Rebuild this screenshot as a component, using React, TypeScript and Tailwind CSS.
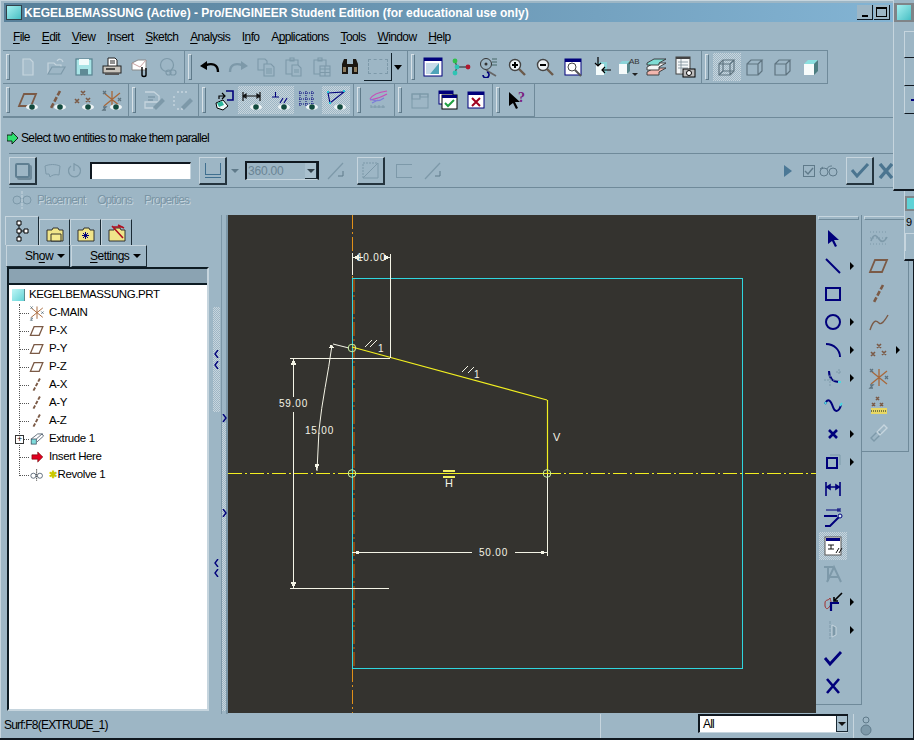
import type { ReactNode } from 'react';

const NAVY = '#00007b';
const OFF = '#7d99a9';
const HI = '#c6d5de';
const BROWN = '#7b5a46';

function Ico({ children, size = 22 }: { children: ReactNode; size?: number }) {
  return (
    <svg width={size} height={size} viewBox="0 0 22 22" fill="none" className="block shrink-0">
      {children}
    </svg>
  );
}

function Eye() {
  return (
    <g>
      <ellipse cx="15" cy="18" rx="6" ry="3" fill="#eef4f6" />
      <circle cx="15" cy="18" r="2.8" fill="#124a3e" />
    </g>
  );
}

const Plane = ({ s = BROWN }: { s?: string }) => <path d="M7 5h12l-5 12H2z" stroke={s} strokeWidth="1.8" />;
const Axis = () => <path d="M15 2L6 19" stroke={BROWN} strokeWidth="2.6" strokeDasharray="5 2" />;
const Crosses = () => (
  <path d="M8 2l4 4M12 2L8 6M2 10l4 4M6 10l-4 4M13 9l4 4M17 9l-4 4" stroke={BROWN} strokeWidth="1.6" />
);
const Csys = () => (
  <g strokeWidth="1.3">
    <path d="M3 4l16 13M3 17L19 4M11 2v17" stroke="#a8683a" />
    <path d="M17 9l3 3M20 9l-3 3M2 2l3 3M5 2L2 5" stroke="#5f7480" />
    <path d="M2 18h3l-3 3h3" stroke="#5f7480" />
  </g>
);
const Win = ({ children }: { children?: ReactNode }) => (
  <g>
    <rect x="3" y="3" width="16" height="16" fill="#fff" stroke={NAVY} />
    <rect x="3" y="3" width="16" height="3" fill={NAVY} />
    {children}
  </g>
);
const Mag = ({ sign }: { sign?: 'plus' | 'minus' }) => (
  <g>
    <path d="M13 13l6 6" stroke="#6b5a4b" strokeWidth="2.4" />
    <circle cx="9" cy="9" r="5.5" fill="#eef3f5" stroke="#444" strokeWidth="1.4" />
    {sign ? <path d="M6 9h6" stroke="#000" strokeWidth="2" /> : null}
    {sign === 'plus' ? <path d="M9 6v6" stroke="#000" strokeWidth="2" /> : null}
  </g>
);
const Box = ({ s = '#5f7480', hidden }: { s?: string; hidden?: boolean }) => (
  <g stroke={s} strokeWidth="1.2">
    <path d="M3 8h11v11H3zM3 8l4-4h11l-4 4M18 4v11l-4 4" />
    {hidden ? <path d="M7 4v11h11M7 15l-4 4" /> : null}
  </g>
);
const Shaded = () => (
  <g>
    <path d="M4 8l4-4h10l-4 4z" fill="#8be0e0" />
    <path d="M14 8l4-4v11l-4 4z" fill="#4d7d80" />
    <rect x="4" y="8" width="10" height="11" fill="#f6fbfb" />
  </g>
);

const icons: Record<string, ReactNode> = {
  newFile: (
    <path d="M6 3h7l3 3v13H6z" stroke={HI} fill="#a6bdcb" strokeWidth="1.2" />
  ),
  open: (
    <g stroke={HI} strokeWidth="1.2">
      <path d="M3 18V7h6l2 2h5v2" />
      <path d="M3 18l4-7h13l-4 7z" stroke={OFF} />
      <path d="M12 5c2-3 5-2 6 1" />
    </g>
  ),
  save: (
    <g>
      <rect x="3" y="3" width="16" height="16" fill="#a8e4e6" stroke="#57828f" strokeWidth="1.2" />
      <rect x="6" y="3" width="10" height="6" fill="#f1fbfb" />
      <rect x="7" y="13" width="8" height="6" fill="#5f8a95" />
    </g>
  ),
  print: (
    <g>
      <path d="M7 2h7l2 2v7H7z" fill="#fff" stroke="#222" />
      <path d="M9 5h5M9 7h5" stroke="#222" />
      <rect x="2" y="10" width="18" height="7" fill="#c8c4bc" stroke="#222" />
      <rect x="4" y="17" width="14" height="2" fill="#555" />
      <path d="M5 13h9" stroke="#222" strokeWidth="1.5" />
    </g>
  ),
  mail: (
    <g>
      <path d="M3 7l6-3h8v10H3z" fill="#fff" stroke="#8a8a8a" />
      <path d="M3 7l8 4 6-7" stroke="#c7a0a0" />
      <path d="M13 11v8c0 2 4 2 4 0v-7" stroke="#000" strokeWidth="1.4" />
    </g>
  ),
  link: (
    <g stroke={OFF} strokeWidth="1.2">
      <circle cx="10" cy="9" r="6.5" />
      <rect x="9" y="14" width="5" height="5" rx="2.5" />
      <rect x="13" y="14" width="6" height="5" rx="2.5" />
    </g>
  ),
  undo: (
    <g>
      <path d="M1 10l7-5v9z" fill="#000" />
      <path d="M7 9c6-2 12-1 12 7" stroke="#000" strokeWidth="2.4" />
    </g>
  ),
  redo: (
    <g>
      <path d="M21 10l-7-5v9z" fill={OFF} />
      <path d="M15 9C9 7 3 8 3 16" stroke={OFF} strokeWidth="2.4" />
    </g>
  ),
  copy: (
    <g stroke={OFF} strokeWidth="1.1">
      <path d="M3 3h7l2 2v9H3z" />
      <path d="M9 8h7l3 3v9H9z" fill="#9db6c5" />
      <path d="M11 13h6M11 15h6M11 17h6" />
    </g>
  ),
  paste: (
    <g stroke={OFF} strokeWidth="1.1">
      <path d="M3 4h12v14H3zM7 2h4v3H7z" />
      <path d="M9 9h6l3 3v8H9z" fill="#9db6c5" />
      <path d="M11 14h5M11 16h5" />
    </g>
  ),
  pasteSpecial: (
    <g stroke={OFF} strokeWidth="1.1">
      <path d="M3 4h12v14H3zM7 2h4v3H7z" />
      <rect x="9" y="10" width="10" height="10" fill="#9db6c5" />
      <path d="M14 10v10M9 13h10M9 16.5h10" />
    </g>
  ),
  binoculars: (
    <g>
      <path d="M3 8l2-5h3v5h6V3h3l2 5v10h-6V11H9v7H3z" fill="#1a1712" />
      <rect x="4" y="11" width="3" height="5" fill="#8c7a5c" />
      <rect x="15" y="11" width="3" height="5" fill="#8c7a5c" />
    </g>
  ),
  sketchView: (
    <g>
      <rect x="2" y="2" width="18" height="18" fill="#fff" stroke={NAVY} />
      <rect x="2" y="2" width="18" height="3" fill={NAVY} />
      <path d="M4 7h13L8 18H4z" fill="#c7dbe8" />
      <path d="M17 7v11H8z" fill="#4ea3b8" />
    </g>
  ),
  repaint: (
    <g>
      <path d="M5 5l2 6-2 6M7 11h10" stroke="#222" />
      <circle cx="5" cy="5" r="2.4" fill="#2fc04c" />
      <circle cx="7" cy="11" r="2.4" fill="#2fc4b4" />
      <circle cx="5" cy="17" r="2.4" fill="#2fc4b4" />
      <circle cx="18" cy="11" r="2.4" fill="#b1182e" />
    </g>
  ),
  spin: (
    <g>
      <circle cx="8" cy="8" r="5.5" stroke="#333" />
      <circle cx="8" cy="8" r="1.5" fill="#333" />
      <path d="M14 3h5M14 6h5M14 9h5" stroke="#466" />
      <path d="M8 14l10 6" stroke="#666" strokeWidth="1.8" />
      <path d="M5 19a3 3 0 104-3" stroke={NAVY} strokeWidth="1.6" />
    </g>
  ),
  zoomIn: <Mag sign="plus" />,
  zoomOut: <Mag sign="minus" />,
  refit: (
    <Win>
      <circle cx="10" cy="11" r="4" stroke="#444" />
      <path d="M13 14l6 6" stroke="#555" strokeWidth="2" />
    </Win>
  ),
  orient: (
    <g>
      <path d="M6 8h8v11H6z" fill="#f3fbfb" />
      <path d="M6 8l3-2h8l-3 2zM14 8l3-2v10l-3 3z" fill="#8bd4d8" />
      <path d="M8 1v9M5 7l3 3 3-3M21 14h-9M15 11l-3 3 3 3" stroke="#000" strokeWidth="1.2" />
    </g>
  ),
  savedView: (
    <g>
      <path d="M1 8l3-3h8l-3 3z" fill="#8bd4d8" />
      <rect x="1" y="8" width="9" height="10" fill="#f4fafa" />
      <path d="M9 8l3-3v10l-3 3z" fill="#55858a" />
      <text x="11" y="8" fontSize="8" fill="#333" fontFamily="Liberation Sans, sans-serif">AB</text>
      <path d="M14 17h6l-3 3z" fill="#222" />
    </g>
  ),
  layers: (
    <g stroke="#333" strokeWidth="0.9">
      <path d="M1 16l7-4h12l-7 4v3H1z" fill="#f2b6ae" />
      <path d="M1 11l7-4h12l-7 4v3H1z" fill="#f4f6f6" />
      <path d="M1 7l7-4h12l-7 4v2H1z" fill="#7fdcd4" />
    </g>
  ),
  tableCam: (
    <g>
      <rect x="2" y="1" width="14" height="17" fill="#f4f7f8" stroke="#444" />
      <rect x="2" y="1" width="14" height="2" fill="#444" />
      <path d="M4 6h10M4 9h10M4 12h10M7 3v14" stroke="#7a8a94" strokeWidth="0.8" />
      <rect x="9" y="13" width="12" height="8" fill="#bbb" stroke="#000" />
      <circle cx="15" cy="17" r="2.5" fill="#fff" stroke="#000" />
    </g>
  ),
  wire: <Box hidden />,
  hiddenLine: <Box />,
  noHidden: <Box />,
  shaded: <Shaded />,
  planeEye: (
    <g>
      <Plane />
      <Eye />
    </g>
  ),
  axisEye: (
    <g>
      <Axis />
      <Eye />
    </g>
  ),
  pointEye: (
    <g>
      <Crosses />
      <Eye />
    </g>
  ),
  csysEye: (
    <g>
      <Csys />
      <Eye />
    </g>
  ),
  editOff: (
    <g stroke={HI} strokeWidth="1.3">
      <path d="M2 3h9l5 4v6H2v6h8" />
      <path d="M5 8h7M5 11h5" stroke={OFF} />
      <path d="M11 18l8-8 2 2-8 8z" fill={OFF} stroke={OFF} />
    </g>
  ),
  chainOff: (
    <g stroke={HI} strokeWidth="1.4">
      <path d="M6 3h10M3 7v10M6 20h7" strokeDasharray="2 2" />
      <path d="M11 18l8-8 2 2-8 8z" fill={OFF} stroke={OFF} />
    </g>
  ),
  setup: (
    <g>
      <path d="M6 10V7h6M9 4l3 3-3 3" stroke="#000" strokeWidth="1.2" />
      <path d="M13 2h7v9h-6" stroke={NAVY} strokeWidth="1.6" />
      <path d="M3 14l7-3 5 6-5 4-6-2z" fill="#f2fafa" stroke="#000" />
      <path d="M4 14l5-2 2 4-5 2z" fill="#2bb59c" />
    </g>
  ),
  dimEye: (
    <g>
      <path d="M2 3v9M19 3v9M2 7h17M2 7l3-2v4zM19 7l-3-2v4z" stroke="#111" strokeWidth="1.2" />
      <Eye />
    </g>
  ),
  consEye: (
    <g>
      <path d="M3 8h7M6.5 3v5M11 14l3-5M15 14l3-5" stroke={NAVY} strokeWidth="1.1" />
      <Eye />
    </g>
  ),
  gridEye: (
    <g>
      <path d="M3 2v15M9 2v15M15 2v15M2 4h16M2 10h16M2 15h16" stroke={NAVY} strokeDasharray="1 1" />
      <Eye />
    </g>
  ),
  vertexEye: (
    <g>
      <path d="M3 4l16-1-14 11z" stroke={NAVY} strokeWidth="1.1" />
      <path d="M2 3h2M18 2h2M4 14h2" stroke="#23c6d8" strokeWidth="2" />
      <Eye />
    </g>
  ),
  sketchCheck: (
    <g>
      <path d="M2 10c3-5 10-7 17-8M2 11c5-1 12-3 17-6" stroke="#c94ab8" strokeWidth="1.2" />
      <path d="M2 10c4 2 9 3 14-1M4 14l6-3" stroke="#7c7cd8" strokeWidth="1.2" />
      <path d="M3 18h14M3 16v3M7 16v3M11 16v3M15 16v3" stroke={OFF} />
    </g>
  ),
  winOff: (
    <g stroke={OFF}>
      <rect x="3" y="5" width="16" height="14" />
      <rect x="3" y="5" width="8" height="5" />
      <rect x="11" y="5" width="8" height="3" />
    </g>
  ),
  winCheck: (
    <g>
      <rect x="2" y="2" width="14" height="13" fill="#fff" stroke={NAVY} />
      <rect x="2" y="2" width="14" height="3" fill={NAVY} />
      <rect x="5" y="6" width="15" height="14" fill="#fff" stroke="#000" />
      <rect x="5" y="6" width="15" height="3" fill={NAVY} />
      <path d="M8 14l3 3 6-6" stroke="#20a040" strokeWidth="2" />
    </g>
  ),
  winClose: (
    <Win>
      <path d="M7 9l8 8M15 9l-8 8" stroke="#a00020" strokeWidth="2" />
    </Win>
  ),
  whatsThis: (
    <g>
      <path d="M2 3v14l4-3 3 6 2-1-3-6h5z" fill="#000" />
      <text x="11" y="13" fontSize="14" fontWeight="bold" fill="#7a1a80" fontFamily="Liberation Serif, serif">?</text>
    </g>
  ),
  arrow: <path d="M6 3v14l4-3 3 6 2-1-3-6h5z" fill={NAVY} />,
  line: <path d="M4 4l14 14" stroke={NAVY} strokeWidth="2" />,
  rect: <rect x="4" y="5" width="14" height="12" stroke={NAVY} strokeWidth="2" />,
  circle: <circle cx="11" cy="11" r="7" stroke={NAVY} strokeWidth="2" />,
  arc: <path d="M4 5c8 0 14 6 14 13" stroke={NAVY} strokeWidth="2" />,
  fillet: (
    <g>
      <path d="M7 4c0 8 4 11 11 11" stroke={NAVY} strokeWidth="2" />
      <path d="M16 15h3" stroke="#4fd8e0" strokeWidth="2" />
      <path d="M2 13h12M8 8v12M17 2v6M14 5h6" stroke={OFF} strokeDasharray="2 1" />
    </g>
  ),
  spline: (
    <g>
      <path d="M3 9c3-7 6-3 8 3s6 5 8-2" stroke={NAVY} strokeWidth="2" />
      <path d="M3 9l1-2M18 11l2-3" stroke="#4fd8e0" strokeWidth="2" />
    </g>
  ),
  point: <path d="M7 7l8 8M15 7l-8 8" stroke={NAVY} strokeWidth="2.6" />,
  offset: (
    <g>
      <path d="M8 4h10v10" stroke={OFF} />
      <rect x="5" y="7" width="10" height="10" stroke={NAVY} strokeWidth="2" />
    </g>
  ),
  dim: <path d="M4 3v14M18 3v14M5 8h12M5 8l3-2v4zM17 8l-3-2v4z" stroke={NAVY} strokeWidth="1.6" />,
  modify: (
    <g>
      <path d="M4 3h14M16 1v4M18 1v4" stroke={NAVY} />
      <path d="M2 9h13M3 19h5l9-9" stroke={NAVY} strokeWidth="2" />
      <circle cx="18" cy="9" r="2" fill="#d9eef2" stroke={NAVY} />
    </g>
  ),
  constraint: (
    <g>
      <rect x="3" y="2" width="16" height="18" fill="#fff" stroke="#555" />
      <rect x="4" y="3" width="14" height="3" fill={NAVY} />
      <path d="M6 10h6M9 10v4M6 14h6M14 18l3-5M17 18l3-5" stroke="#111" />
    </g>
  ),
  textOff: (
    <g stroke={OFF}>
      <path d="M2 4h9M6 4v14" strokeWidth="2" />
      <path d="M5 19L12 4l7 15M8 14h8" strokeWidth="2" />
    </g>
  ),
  trim: (
    <g>
      <path d="M3 12c0-4 4-2 5-5 1 4 2 5 0 8s-4 4-5 0z" stroke="#a03030" />
      <path d="M9 20v-8h8" stroke={NAVY} strokeWidth="2.2" />
      <path d="M20 2l-7 7M12 6v4h4" stroke="#000" strokeWidth="1.6" />
    </g>
  ),
  mirror: (
    <g>
      <path d="M8 2v18" stroke={OFF} strokeDasharray="3 1" />
      <path d="M10 6l4 2v8l-4 2z" fill={OFF} stroke={HI} />
    </g>
  ),
  check: <path d="M3 11l5 6L19 5" stroke={NAVY} strokeWidth="2.8" />,
  cancel: <path d="M5 4l12 14M17 4L5 18" stroke={NAVY} strokeWidth="2.6" />,
  sketchGrid: (
    <g>
      <path d="M2 5h18M2 11h18M2 17h18" stroke={OFF} strokeDasharray="1 2" />
      <path d="M3 14c3-9 6-5 8-2s5 4 8-2" stroke={OFF} strokeWidth="1.6" />
    </g>
  ),
  curve: <path d="M2 19c4-12 7-9 9-7s5-1 9-8" stroke={BROWN} strokeWidth="1.4" />,
  rightPoints: (
    <g transform="translate(1 3)">
      <Crosses />
    </g>
  ),
  pointGrid: (
    <g>
      <path d="M8 2l3 3M11 2L8 5M4 8l3 3M7 8l-3 3M12 8l3 3M15 8l-3 3" stroke={BROWN} strokeWidth="1.6" />
      <rect x="3" y="13" width="16" height="6" fill="#e8d765" />
      <path d="M3 16h16" stroke="#7a7a40" strokeDasharray="1 1" strokeWidth="2" />
    </g>
  ),
  chain: (
    <g strokeWidth="1.4">
      <path d="M3 15l7-7 3 3-7 7z" stroke={OFF} />
      <path d="M9 9l7-7 3 3-7 7z" stroke={HI} />
    </g>
  ),
  bead: (
    <g>
      <circle cx="11" cy="5" r="3" stroke="#5f7a8a" />
      <circle cx="11" cy="15" r="5" fill="#7d99a9" stroke="#5f7a8a" />
    </g>
  ),
  planeFlat: <Plane />,
  axisFlat: <Axis />,
  csysFlat: <Csys />,
};

function Btn({ icon, on }: { icon: string; on?: boolean }) {
  return (
    <div
      className={`flex h-[28px] w-[28px] shrink-0 items-center justify-center ${
        on ? '[background:repeating-conic-gradient(#c8d5dd_0_25%,#9db6c5_0_50%)_0_0/2px_2px]' : ''
      }`}
    >
      <Ico>{icons[icon]}</Ico>
    </div>
  );
}

const toggled = ['dimEye', 'consEye', 'vertexEye'];

function Group({ items, width, children }: { items?: string[]; width: number; children?: ReactNode }) {
  return (
    <div
      className="flex h-[34px] shrink-0 items-center border-r border-t border-b border-[#6f8a9a] pl-[1px]"
      style={{ width }}
    >
      <span className="ml-[2px] mr-[4px] h-[26px] w-[4px] shrink-0 border-l border-t border-white/60 border-b-[#5f7a8a] border-r-[#5f7a8a] border-b border-r" />
      {items?.map((name, index) => (
        <Btn key={`${name}-${index}`} icon={name} on={toggled.includes(name)} />
      ))}
      {children}
    </div>
  );
}

function TitleBar() {
  return (
    <div className="ml-[4px] mt-[3px] flex h-[19px] w-[889px] items-center bg-gradient-to-r from-[#577f99] to-[#83b4d4] pl-[2px] pr-[3px]">
      <span className="mr-[2px] h-[15px] w-[16px] shrink-0 border border-[#33414a] bg-gradient-to-br from-[#a4f0f0] to-[#43bfc4]" />
      <span className="truncate text-[12px] font-bold text-white">
        KEGELBEMASSUNG (Active) - Pro/ENGINEER Student Edition (for educational use only)
      </span>
      <span className="ml-auto flex h-[15px] w-[16px] items-end justify-center border-b border-r border-[#101820] bg-[#9db6c5] pb-[2px]">
        <span className="h-[2px] w-[6px] bg-black" />
      </span>
      <span className="ml-[1px] flex h-[15px] w-[16px] items-center justify-center border-b border-r border-[#101820] bg-[#9db6c5]">
        <span className="h-[10px] w-[11px] border border-t-2 border-black" />
      </span>
    </div>
  );
}

const menus: [string, string, string][] = [
  ['', 'F', 'ile'],
  ['', 'E', 'dit'],
  ['', 'V', 'iew'],
  ['', 'I', 'nsert'],
  ['', 'S', 'ketch'],
  ['', 'A', 'nalysis'],
  ['I', 'n', 'fo'],
  ['A', 'p', 'plications'],
  ['', 'T', 'ools'],
  ['', 'W', 'indow'],
  ['', 'H', 'elp'],
];

function MenuBar() {
  return (
    <div className="flex h-[28px] items-center gap-[11.8px] pl-[13px] pt-[2px] text-[12px] tracking-[-0.6px] text-black">
      {menus.map(([pre, key, rest]) => (
        <span key={pre + key + rest}>
          {pre}
          <span className="underline underline-offset-2">{key}</span>
          {rest}
        </span>
      ))}
    </div>
  );
}

function Toolbars() {
  return (
    <div className="ml-[3px] flex flex-col border-b border-[#6f8a9a]">
      <div className="flex">
        <Group width={182} items={['newFile', 'open', 'save', 'print', 'mail', 'link']} />
        <Group width={223} items={['undo', 'redo', 'copy', 'paste', 'pasteSpecial', 'binoculars']}>
          <div className="flex h-[28px] w-[28px] shrink-0 items-center justify-center border-b border-r border-[#10202a]">
            <span className="h-[15px] w-[20px] border border-dashed border-[#7d99a9]" />
          </div>
          <span className="ml-[2px] h-0 w-0 border-x-[4px] border-t-[5px] border-x-transparent border-t-black" />
        </Group>
        <Group
          width={294}
          items={['sketchView', 'repaint', 'spin', 'zoomIn', 'zoomOut', 'refit', 'orient', 'savedView', 'layers', 'tableCam']}
        />
        <Group width={126}>
          <Btn icon="wire" on />
          <Btn icon="hiddenLine" />
          <Btn icon="noHidden" />
          <Btn icon="shaded" />
        </Group>
      </div>
      <div className="-mt-px flex">
        <Group width={126} items={['planeEye', 'axisEye', 'pointEye', 'csysEye']} />
        <Group width={70} items={['editOff', 'chainOff']} />
        <Group width={155} items={['setup', 'dimEye', 'consEye', 'gridEye', 'vertexEye']} />
        <Group width={41} items={['sketchCheck']} />
        <Group width={98} items={['winOff', 'winCheck', 'winClose']} />
        <Group width={42} items={['whatsThis']} />
      </div>
    </div>
  );
}

function Prompt() {
  return (
    <div className="flex h-[35px] items-center pl-[7px] pt-[4px]">
      <svg width="11" height="12" viewBox="0 0 11 12" className="mr-[3px]">
        <path d="M5 0l6 6-6 6V9H0V3h5z" fill="#2fe070" stroke="#000" strokeWidth="0.8" />
      </svg>
      <span className="text-[12px] tracking-[-0.65px] text-black">Select two entities to make them parallel</span>
    </div>
  );
}

function Raised({ children }: { children: ReactNode }) {
  return (
    <div className="flex h-[28px] w-[28px] shrink-0 items-center justify-center border border-b-2 border-r-2 border-l-[#c6d5de] border-t-[#c6d5de] border-r-[#24343e] border-b-[#24343e]">
      {children}
    </div>
  );
}

function Dashboard() {
  return (
    <div className="ml-[9px] flex h-[35px] items-center border-y border-[#6f8a9a]">
      <Raised>
        <span className="h-[15px] w-[15px] rounded-[2px] border-2 border-[#5f7f92] shadow-[2px_2px_0_#6f8a9a]" />
      </Raised>
      <div className="ml-[7px] w-[16px]">
        <svg width="17" height="14" viewBox="0 0 17 14" fill="none">
          <path d="M1 2c5-2 10-2 15 0l-1 9c-4-1-7 0-9 2l-1-3H2z" stroke={OFF} />
        </svg>
      </div>
      <div className="ml-[7px] w-[14px]">
        <svg width="15" height="16" viewBox="0 0 15 16" fill="none">
          <path d="M11 3a6 6 0 11-7 0M7 0v8M7 1l4 2" stroke={OFF} strokeWidth="1.2" />
        </svg>
      </div>
      <div className="ml-[9px] h-[17px] w-[101px] border-l-2 border-t-2 border-l-[#101820] border-t-[#101820] border-r border-r-[#c6d5de] bg-white" />
      <div className="ml-[8px]">
        <Raised>
          <span className="flex h-[15px] w-[16px] flex-col justify-end">
            <span className="flex h-[12px] w-full border-x border-b border-[#3f6f8f]" />
            <span className="mt-[2px] h-px w-full bg-[#3f6f8f]" />
          </span>
        </Raised>
      </div>
      <span className="ml-[4px] h-0 w-0 border-x-[4px] border-t-[4px] border-x-transparent border-t-[#5f7a8a]" />
      <div className="ml-[6px] flex h-[19px] w-[74px] items-center justify-between border-l-2 border-t-2 border-b border-r-2 border-l-[#101820] border-t-[#101820] border-r-[#101820] border-b-[#c6d5de] pl-[1px] text-[12px] tracking-[-0.2px] text-[#6a8494]">
        360.00
        <span className="flex h-[16px] w-[12px] items-center justify-center border-r border-b border-[#1a2a34] bg-[#a9c0ce]">
          <span className="h-0 w-0 border-x-[4px] border-t-[4px] border-x-transparent border-t-[#33424c]" />
        </span>
      </div>
      <svg width="22" height="22" viewBox="0 0 22 22" fill="none" className="ml-[6px]">
        <path d="M3 19L18 3" stroke={OFF} strokeWidth="1.2" />
        <path d="M13 16h5v-5" stroke="#5f7a8a" />
      </svg>
      <div className="ml-[10px]">
        <Raised>
          <svg width="20" height="20" viewBox="0 0 20 20" fill="none">
            <path d="M2 18L17 3M2 18h15V3" stroke={OFF} />
            <path d="M2 18V3h15" stroke={OFF} strokeDasharray="2 1" />
          </svg>
        </Raised>
      </div>
      <div className="ml-[11px] h-[14px] w-[16px] border-y border-l border-[#7d99a9]" />
      <svg width="22" height="22" viewBox="0 0 22 22" fill="none" className="ml-[10px]">
        <path d="M3 19L18 3" stroke={OFF} strokeWidth="1.2" />
        <path d="M13 16h5v-5" stroke="#5f7a8a" />
      </svg>
      <span className="ml-auto h-0 w-0 border-y-[6px] border-l-[8px] border-y-transparent border-l-[#4b7896]" />
      <span className="ml-[11px] flex h-[12px] w-[12px] items-center justify-center border border-[#5f7a8a] text-[#5f7a8a]">
        <svg width="10" height="10" viewBox="0 0 10 10" fill="none">
          <path d="M1 5l3 3 5-6" stroke="#5f7a8a" strokeWidth="1.4" />
        </svg>
      </span>
      <svg width="20" height="12" viewBox="0 0 20 12" fill="none" className="ml-[4px]">
        <circle cx="5" cy="7" r="4" stroke="#5f7a8a" />
        <circle cx="14" cy="7" r="4" stroke="#5f7a8a" />
        <path d="M8 4c1-3 4-3 5-3M1 4l3-2" stroke="#5f7a8a" />
      </svg>
      <div className="ml-[7px]">
        <Raised>
          <svg width="20" height="16" viewBox="0 0 20 16" fill="none">
            <path d="M2 8l5 6L18 2" stroke="#4b7590" strokeWidth="3" />
          </svg>
        </Raised>
      </div>
      <svg width="16" height="16" viewBox="0 0 16 16" fill="none" className="ml-[4px] mr-[20px]">
        <path d="M2 1l12 14M14 1L2 15" stroke="#4b7590" strokeWidth="3.4" />
      </svg>
    </div>
  );
}

function Tabs() {
  return (
    <div className="flex h-[27px] items-center pb-[4px] pl-[12px] text-[12px] tracking-[-0.95px] text-[#7a95a5] [text-shadow:1px_1px_0_#c6d5de]">
      <svg width="20" height="20" viewBox="0 0 20 20" fill="none" className="mr-[5px]">
        <circle cx="5" cy="10" r="4" stroke={OFF} />
        <circle cx="15" cy="10" r="4" stroke={OFF} />
        <path d="M10 1v18" stroke={HI} strokeDasharray="3 1" />
      </svg>
      <span>Placement</span>
      <span className="ml-[12px]">Options</span>
      <span className="ml-[12px]">Properties</span>
    </div>
  );
}

const TabFolder = ({ inner }: { inner?: ReactNode }) => (
  <svg width="20" height="20" viewBox="0 0 20 20" fill="none">
    <path d="M2 7h5l1-2h5l1 2h4v11H2z" fill="#f0e58a" stroke="#222" strokeWidth="0.9" />
    {inner}
  </svg>
);

function NavTabs() {
  return (
    <div className="flex h-[30px] items-end pl-[5px]">
      <div className="flex h-[29px] w-[34px] items-center justify-center border-l border-t border-r border-l-[#c6d5de] border-t-[#c6d5de] border-r-[#1a2a34]">
        <svg width="14" height="22" viewBox="0 0 14 22" fill="none">
          <path d="M2 1h4v4H2zM2 9h4v4H2zM9 9h4v4H9zM2 17h4v4H2z" stroke="#000" fill="#fff" />
          <path d="M4 5v4M4 13v4M6 11h3" stroke="#000" />
        </svg>
      </div>
      {[
        <TabFolder key="a" inner={<path d="M6 11h10v7H6z" fill="#f4ea90" stroke="#222" strokeWidth="0.9" />} />,
        <TabFolder key="b" inner={<path d="M7 10l5 5M12 10l-5 5M9.5 9v7M6 12.5h7" stroke={NAVY} />} />,
        <TabFolder key="c" inner={<path d="M5 3l11 12M6 4h10M11 2l6 3" stroke="#b01020" strokeWidth="1.6" />} />,
      ].map((node, index) => (
        <div
          key={index}
          className="flex h-[26px] w-[31px] items-center justify-center border-l border-t border-r border-l-[#c6d5de] border-t-[#c6d5de] border-r-[#1a2a34]"
        >
          {node}
        </div>
      ))}
    </div>
  );
}

function Trigger({ label, ul, rest, width, left }: { label: string; ul: string; rest: string; width: number; left: number }) {
  return (
    <div
      className="flex h-[22px] items-center gap-[4px] border-b border-r border-l border-t border-b-[#1a2a34] border-r-[#1a2a34] border-l-[#c6d5de] border-t-[#c6d5de] text-[12px] tracking-[-0.5px]"
      style={{ width, paddingLeft: left }}
    >
      <span>
        {label}
        <span className="underline underline-offset-2">{ul}</span>
        {rest}
      </span>
      <span className="h-0 w-0 border-x-[4px] border-t-[4px] border-x-transparent border-t-black" />
    </div>
  );
}

const treeRows: { icon: ReactNode; label: string; star?: boolean; plus?: boolean }[] = [
  { icon: <Csys />, label: 'C-MAIN' },
  { icon: <Plane />, label: 'P-X' },
  { icon: <Plane />, label: 'P-Y' },
  { icon: <Plane />, label: 'P-Z' },
  { icon: <Axis />, label: 'A-X' },
  { icon: <Axis />, label: 'A-Y' },
  { icon: <Axis />, label: 'A-Z' },
  {
    icon: (
      <g>
        <rect x="3" y="11" width="7" height="7" fill="#7fdcdc" stroke="#345" />
        <path d="M10 11l8-7 2 3-9 8M3 11l9-7h7" stroke="#345" />
      </g>
    ),
    label: 'Extrude 1',
    plus: true,
  },
  {
    icon: <path d="M4 8h8V4l7 7-7 7v-4H4z" fill="#e00020" stroke="#600" strokeWidth="0.8" />,
    label: 'Insert Here',
  },
  {
    icon: (
      <g stroke="#345" fill="none">
        <circle cx="6" cy="12" r="3.5" />
        <circle cx="15" cy="12" r="3.5" />
        <path d="M10.5 3v16" strokeDasharray="2 1" stroke="#000" />
      </g>
    ),
    label: 'Revolve 1',
    star: true,
  },
];

function ModelTree() {
  return (
    <div className="ml-[7px] flex h-[444px] w-[202px] flex-col border-2 border-[#0c1a22] border-r-[#c6d5de] border-b-[#c6d5de] bg-white text-[11.5px] tracking-[-0.4px] text-black">
      <div className="h-[16px] shrink-0 border-b-2 border-[#0c1a22] bg-[#8ba3b2]" />
      <div className="flex h-[19px] items-center pl-[3px]">
        <span className="mr-[5px] h-[12px] w-[12px] bg-gradient-to-br from-[#bdf6f6] to-[#5fd2d6] shadow-[1px_0_0_#5a8a90]" />
        KEGELBEMASSUNG.PRT
      </div>
      <div className="relative">
        <span className="absolute left-[10px] top-0 h-[172px] border-l border-dotted border-[#555]" />
        {treeRows.map((row) => (
          <div key={row.label} className="relative flex h-[18px] items-center pl-[10px]">
            <span className="w-[10px] border-t border-dotted border-[#555]" />
            {row.plus ? (
              <span className="absolute left-[6px] flex h-[9px] w-[9px] items-center justify-center border border-[#333] bg-white text-[9px] leading-none">
                +
              </span>
            ) : null}
            <span className="mr-[4px]">
              <Ico size={16}>{row.icon}</Ico>
            </span>
            {row.star ? <span className="mr-[1px] text-[10px] font-bold leading-none text-[#c8c800]">✱</span> : null}
            {row.label}
          </div>
        ))}
      </div>
    </div>
  );
}

const chevrons: { x: number; y: number; right?: boolean }[] = [
  { x: 3, y: 135 },
  { x: 3, y: 146 },
  { x: 11, y: 199, right: true },
  { x: 11, y: 294, right: true },
  { x: 3, y: 344 },
  { x: 3, y: 354 },
];

function Sash() {
  return (
    <div className="relative h-[499px] w-[17px] shrink-0">
      <span className="absolute left-[2px] top-[92px] h-[105px] w-[7px] [background:repeating-conic-gradient(#c8d5dd_0_25%,#9db6c5_0_50%)_0_0/2px_2px]" />
      <span className="absolute left-[11px] top-[208px] h-[288px] w-[4px] [background:repeating-conic-gradient(#c8d5dd_0_25%,#9db6c5_0_50%)_0_0/2px_2px]" />
      <span className="absolute left-[10px] top-0 h-full w-px bg-[#7d97a7]" />
      <span className="absolute right-0 top-0 h-full w-[2px] bg-[#7d97a7]" />
      {chevrons.map((c) => (
        <svg
          key={c.y}
          width="5"
          height="8"
          viewBox="0 0 5 8"
          fill="none"
          className="absolute"
          style={{ left: c.x, top: c.y }}
        >
          <path d={c.right ? 'M1 0l3 4-3 4' : 'M4 0L1 4l3 4'} stroke={NAVY} strokeWidth="1.4" />
        </svg>
      ))}
    </div>
  );
}

function Sketch() {
  const ox = 228;
  const oy = 215;
  const w = '#f4f4e6';
  const label = { fill: w, fontSize: 10, fontFamily: 'Liberation Sans, sans-serif', letterSpacing: '0.8px' };
  return (
    <svg width="588" height="498" viewBox={`${ox} ${oy} 588 498`} className="block" shapeRendering="crispEdges">
      <path d="M352.5 215v63M352.5 668v45" stroke="#e0901a" strokeDasharray="14 3 2 3" />
      <path d="M354 278v390" stroke="#8a4a14" strokeWidth="2" strokeDasharray="14 3 2 3" />
      <rect x="352.5" y="278.5" width="390" height="390" fill="none" stroke="#2fd6de" />
      <path d="M228 473.5h124M547 473.5h269" stroke="#f2ee20" strokeWidth="1.2" strokeDasharray="14 3 2 3" shapeRendering="auto" />
      <g stroke="#f2f020" fill="none" strokeWidth="1.2" shapeRendering="auto">
        <path d="M352 473.5h195M547.5 473V400" />
        <path d="M352 347l195 53" />
      </g>
      <g fill="none" stroke={w}>
        <path d="M352.5 253v22M390.5 254v104M352 257.5h11M384 257.5h6" />
        <path d="M290 358.5h100M290 588.5h99" />
        <path d="M293.5 359v38M293.5 412v176" />
        <path d="M352 552.5h120M515 552.5h32M547.5 474v82" />
        <g shapeRendering="auto">
          <path d="M332 345c-4 30-10 55-13 85l-2 41" />
          <path d="M333 344l16 4" />
        </g>
      </g>
      <g fill={w}>
        <path d="M353 257.5l6-3v6zM390 257.5l-6-3v6zM293.5 359l-3 6h6zM293.5 588l-3-6h6z" />
        <path d="M353 552.5l6-2v4zM547 552.5l-6-2v4zM316.5 470l-2-6h5zM331 344l3 4h-5z" />
        <rect x="443" y="470" width="12" height="2" fill="#f2f060" />
        <rect x="443" y="476" width="12" height="2" fill="#f2f060" />
      </g>
      <g fill="none" stroke="#c8f0a0" shapeRendering="auto">
        <circle cx="352" cy="348" r="3.8" />
        <circle cx="352" cy="473.5" r="3.8" />
        <circle cx="547" cy="473.5" r="3.8" />
      </g>
      <path d="M365 347l7-7M370 347l7-7" stroke={w} shapeRendering="auto" />
      <path d="M462 372l6-6M468 373l6-6" stroke={w} shapeRendering="auto" />
      <text x="378" y="352" {...label} letterSpacing="0">1</text>
      <text x="474" y="378" {...label} letterSpacing="0">1</text>
      <text x="357" y="261" {...label}>10.00</text>
      <text x="279" y="407" {...label}>59.00</text>
      <text x="305" y="434" {...label}>15.00</text>
      <text x="479" y="556" {...label}>50.00</text>
      <text x="553" y="441" {...label} fontSize={11}>V</text>
      <text x="445" y="487" {...label} fontSize={11}>H</text>
    </svg>
  );
}

const leftTools: { icon: string; more?: boolean; on?: boolean }[] = [
  { icon: 'arrow' },
  { icon: 'line', more: true },
  { icon: 'rect' },
  { icon: 'circle', more: true },
  { icon: 'arc', more: true },
  { icon: 'fillet', more: true },
  { icon: 'spline' },
  { icon: 'point', more: true },
  { icon: 'offset', more: true },
  { icon: 'dim' },
  { icon: 'modify' },
  { icon: 'constraint', on: true },
  { icon: 'textOff' },
  { icon: 'trim', more: true },
  { icon: 'mirror', more: true },
  { icon: 'check' },
  { icon: 'cancel' },
];

const rightTools: { icon: string; more?: boolean }[] = [
  { icon: 'sketchGrid' },
  { icon: 'planeFlat' },
  { icon: 'axisFlat' },
  { icon: 'curve' },
  { icon: 'rightPoints', more: true },
  { icon: 'csysFlat' },
  { icon: 'pointGrid' },
  { icon: 'chain' },
];

function ToolStrip({
  items,
  width,
  height,
}: {
  items: { icon: string; more?: boolean; on?: boolean }[];
  width: number;
  height: number;
}) {
  return (
    <div
      className="flex shrink-0 flex-col border-b border-r border-[#6f8a9a] pl-[3px] pt-[1px]"
      style={{ width, height }}
    >
      <div className="mb-[4px] mr-[2px] -ml-[1px] h-[4px] border border-[#c6d5de] border-b-[#6f8a9a] border-r-[#6f8a9a]" />
      {items.map((item) => (
        <div key={item.icon} className="relative h-[28px] w-[28px]">
          <Btn icon={item.icon} on={item.on} />
          {item.more ? (
            <span className="absolute left-[31px] top-[10px] h-0 w-0 border-y-[4px] border-l-[4px] border-y-transparent border-l-black" />
          ) : null}
        </div>
      ))}
    </div>
  );
}

function StatusBar() {
  return (
    <div className="flex h-[26px] items-start border-b-2 border-[#101820] text-[12px] tracking-[-0.8px] text-black">
      <span className="w-[600px] pl-[4px] pt-[2px]">Surf:F8(EXTRUDE_1)</span>
      <span className="h-[24px] border-l border-[#c6d5de]" />
      <div className="ml-[97px] flex h-[19px] w-[150px] items-center justify-between border-l-2 border-t-2 border-b border-l-[#101820] border-t-[#101820] border-b-[#c6d5de] bg-white pl-[3px]">
        All
        <span className="flex h-[16px] w-[12px] items-center justify-center border-x border-b border-[#1a2a34] bg-[#a9c0ce]">
          <span className="h-0 w-0 border-x-[4px] border-t-[4px] border-x-transparent border-t-[#111]" />
        </span>
      </div>
      <span className="ml-[5px] h-[24px] border-l border-[#c6d5de]" />
      <span className="ml-[1px] mt-[1px]">
        <Ico>{icons.bead}</Ico>
      </span>
    </div>
  );
}

function SideWindows() {
  return (
    <>
      <span className="absolute bottom-0 right-0 top-[261px] w-px bg-[#101820]" />
      <div className="absolute right-0 top-0 flex h-[191px] w-[21px] flex-col border-b-2 border-l border-b-[#101820] border-l-[#c6d5de] bg-[#9db6c5]">
        <div className="mt-[3px] flex h-[19px] items-center bg-[#7f8488] pl-[3px]">
          <span className="h-[15px] w-[14px] bg-gradient-to-br from-[#a4f0f0] to-[#43bfc4]" />
        </div>
        <div className="ml-[10px] mt-[9px] flex flex-col gap-[1px]">
          <span className="h-[27px] border-b border-l border-t border-[#c6d5de] border-b-[#101820]" />
          <span className="h-[27px] border-b border-l border-[#c6d5de] border-b-[#101820]" />
          <span className="relative h-[27px] border-b border-l border-[#c6d5de] border-b-[#101820]">
            <span className="absolute right-0 top-[12px] h-[2px] w-[3px] bg-[#00007b]" />
          </span>
        </div>
      </div>
      <div className="absolute right-0 top-[191px] flex h-[70px] w-[10px] flex-col border-b-2 border-l border-b-[#101820] border-l-[#c6d5de] bg-[#9db6c5]">
        <div className="mt-[5px] h-[15px] bg-[#7f8488] pl-[2px] pt-[2px]">
          <span className="block h-[11px] w-[8px] bg-[#5fd2d6]" />
        </div>
        <span className="mt-[4px] pl-[1px] text-[11px] leading-[14px]">9</span>
        <span className="mt-[4px] h-[18px] border-l border-t border-[#c6d5de]" />
      </div>
    </>
  );
}

export default function App() {
  return (
    <div className='relative flex h-[740px] w-[914px] flex-col overflow-hidden bg-[#9db6c5] font-["Liberation_Sans",sans-serif] shadow-[inset_1px_1px_0_#c6d5de]'>
      <TitleBar />
      <MenuBar />
      <Toolbars />
      <Prompt />
      <Dashboard />
      <Tabs />
      <div className="flex h-[499px]">
        <div className="flex w-[211px] shrink-0 flex-col">
          <NavTabs />
          <div className="ml-[6px] flex gap-[1px]">
            <Trigger label="Sh" ul="o" rest="w" width={64} left={18} />
            <Trigger label="" ul="S" rest="ettings" width={76} left={18} />
          </div>
          <ModelTree />
        </div>
        <Sash />
        <div className="h-[498px] w-[588px] shrink-0 bg-[#34332f]">
          <Sketch />
        </div>
        <ToolStrip items={leftTools} width={46} height={490} />
        <ToolStrip items={rightTools} width={47} height={237} />
      </div>
      <StatusBar />
      <SideWindows />
    </div>
  );
}
